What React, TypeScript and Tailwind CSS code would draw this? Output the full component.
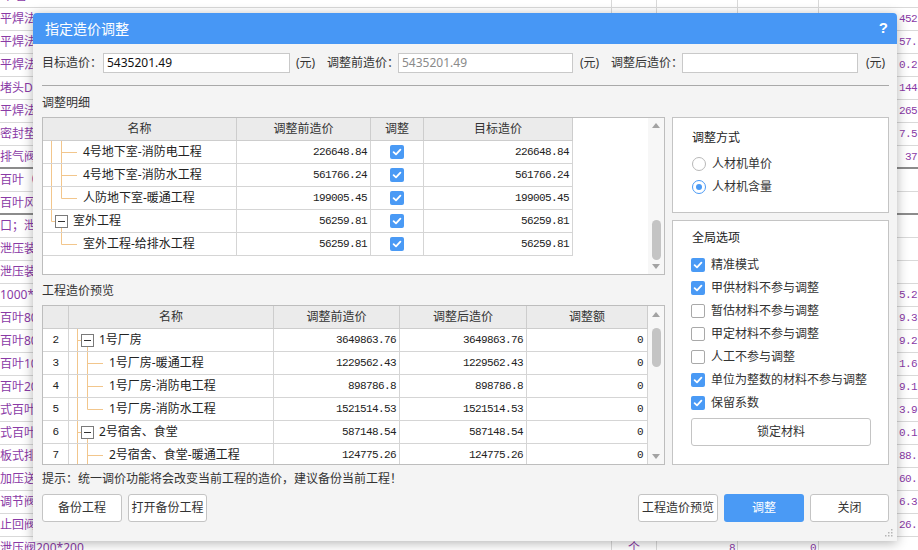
import React from "react";

const ui = "font-['Noto_Sans','Noto_Sans_CJK_SC',sans-serif]";
const mono = "font-['Liberation_Mono','Noto_Sans_CJK_SC',monospace] text-[11px] tracking-[-0.6px]";

// sheet behind the dialog
const sheet: { a: string; b?: string; c?: string; d?: string; thick?: boolean }[] = [
  { a: "叶 管", b: "个" },
  { a: "平焊法兰" },
  { a: "平焊法兰" },
  { a: "平焊法兰" },
  { a: "堵头DN100" },
  { a: "平焊法兰" },
  { a: "密封垫片" },
  { a: "排气阀", thick: true },
  { a: "百叶（" },
  { a: "百叶风口", thick: true },
  { a: "口；泄压" },
  { a: "泄压装置" },
  { a: "泄压装置" },
  { a: "1000*800" },
  { a: "百叶800" },
  { a: "百叶800" },
  { a: "百叶1000" },
  { a: "百叶200" },
  { a: "式百叶" },
  { a: "式百叶" },
  { a: "板式排烟" },
  { a: "加压送风" },
  { a: "调节阀" },
  { a: "止回阀" },
  { a: "泄压阀200*200", b: "个", c: "8", d: "0" },
];
const sheetE = ["", "452", "57.", "0.2", "144", "265", "7.5", "\u00a037", "", "", "", "", "", "5.2", "9.3", "9.2", "1.6", "9.1", "3.9", "0.1", "88.", "60.", "6.3", "26.", ""];

type Guide = { anc?: "full" | "top"; child?: "full" | "top" | "down"; box?: boolean };

function TreeGuide({ anc, child, box }: Guide) {
  const c = "#f2c68c";
  return (
    <svg width={box ? 29 : 40} height="22" className="shrink-0">
      {anc === "full" && <line x1="8.5" y1="0" x2="8.5" y2="22" stroke={c} />}
      {anc === "top" && <line x1="8.5" y1="0" x2="8.5" y2="11.5" stroke={c} />}
      {box ? (
        <>
          {anc && <line x1="8.5" y1="11.5" x2="12.5" y2="11.5" stroke={c} />}
          {child === "down" && <line x1="18.5" y1="17.5" x2="18.5" y2="22" stroke={c} />}
          <rect x="12.5" y="5.5" width="12" height="12" fill="white" stroke="#7a7a7a" />
          <line x1="15" y1="11.5" x2="22" y2="11.5" stroke="#333" />
        </>
      ) : (
        <>
          {child === "full" && <line x1="18.5" y1="0" x2="18.5" y2="22" stroke={c} />}
          {child === "top" && <line x1="18.5" y1="0" x2="18.5" y2="11.5" stroke={c} />}
          <line x1="18.5" y1="11.5" x2="34" y2="11.5" stroke={c} />
        </>
      )}
    </svg>
  );
}

function Check({ on }: { on: boolean }) {
  return on ? (
    <span className="flex h-[14px] w-[14px] shrink-0 items-center justify-center rounded-[2px] bg-[#4a9af5]">
      <svg width="10" height="10" viewBox="0 0 10 10">
        <path d="M1.6 5.2 L4 7.4 L8.4 2.6" fill="none" stroke="white" strokeWidth="1.8" strokeLinecap="round" strokeLinejoin="round" />
      </svg>
    </span>
  ) : (
    <span className="h-[14px] w-[14px] shrink-0 rounded-[2px] border border-[#a9a9a9] bg-white" />
  );
}

function Radio({ on }: { on: boolean }) {
  return (
    <span
      className={`flex h-[14px] w-[14px] shrink-0 items-center justify-center rounded-full border bg-white ${
        on ? "border-[#4a9af5]" : "border-[#b8b8b8]"
      }`}
    >
      {on && <span className="h-[6px] w-[6px] rounded-full bg-[#4a9af5]" />}
    </span>
  );
}

function ScrollBar({ thumb }: { thumb: string }) {
  return (
    <div className="flex w-[16px] shrink-0 flex-col items-center bg-[#f7f7f7]">
      <div className="flex h-[16px] items-center justify-center">
        <svg width="8" height="5">
          <path d="M0 5 L4 0 L8 5Z" fill="#a3a3a3" />
        </svg>
      </div>
      <div className="flex w-full flex-1 flex-col items-center">
        <div className={`${thumb} w-[9px] rounded-full bg-[#c4c4c4]`} />
      </div>
      <div className="flex h-[16px] items-center justify-center">
        <svg width="8" height="5">
          <path d="M0 0 L4 5 L8 0Z" fill="#a3a3a3" />
        </svg>
      </div>
    </div>
  );
}

const head = "flex h-[23px] shrink-0 items-center justify-center border-r border-b border-[#cdcdcd] bg-[#ebebeb]";
const cell = "flex h-[23px] shrink-0 items-center border-r border-b border-[#d5d5d5]";

const detail: { name: string; v: string; g: Guide }[] = [
  { name: "4号地下室-消防电工程", v: "226648.84", g: { anc: "full", child: "full" } },
  { name: "4号地下室-消防水工程", v: "561766.24", g: { anc: "full", child: "full" } },
  { name: "人防地下室-暖通工程", v: "199005.45", g: { anc: "full", child: "top" } },
  { name: "室外工程", v: "56259.81", g: { anc: "top", child: "down", box: true } },
  { name: "室外工程-给排水工程", v: "56259.81", g: { child: "top" } },
];

const preview: { no: string; name: string; before: string; after: string; g: Guide }[] = [
  { no: "2", name: "1号厂房", before: "3649863.76", after: "3649863.76", g: { anc: "full", child: "down", box: true } },
  { no: "3", name: "1号厂房-暖通工程", before: "1229562.43", after: "1229562.43", g: { anc: "full", child: "full" } },
  { no: "4", name: "1号厂房-消防电工程", before: "898786.8", after: "898786.8", g: { anc: "full", child: "full" } },
  { no: "5", name: "1号厂房-消防水工程", before: "1521514.53", after: "1521514.53", g: { anc: "full", child: "top" } },
  { no: "6", name: "2号宿舍、食堂", before: "587148.54", after: "587148.54", g: { anc: "full", child: "down", box: true } },
  { no: "7", name: "2号宿舍、食堂-暖通工程", before: "124775.26", after: "124775.26", g: { anc: "full", child: "full" } },
];

const options: [string, boolean][] = [
  ["精准模式", true],
  ["甲供材料不参与调整", true],
  ["暂估材料不参与调整", false],
  ["甲定材料不参与调整", false],
  ["人工不参与调整", false],
  ["单位为整数的材料不参与调整", true],
  ["保留系数", true],
];

const btn = "flex h-[28px] shrink-0 items-center justify-center rounded-[3px] border border-[#c4c4c4] bg-white text-[12px] text-[#333]";

export default function App() {
  return (
    <div className={`relative h-[550px] w-[918px] overflow-hidden bg-white ${ui}`}>
      {/* Sheet in the background */}
      <div className="mt-[-15px] flex flex-col">
        {sheet.map((r, i) => {
          const under = i > 0 && i < sheet.length - 1;
          return (
            <div
              key={i}
              className={`flex h-[23px] shrink-0 text-[12px] leading-[16px] text-[#8a3aa6] ${
                r.thick ? "border-b-2 border-[#8c8c8c]" : "border-b border-[#d9d9d9]"
              }`}
            >
              <div className="flex w-[612px] shrink-0 items-center border-r border-[#d9d9d9]">
                <span className={`overflow-hidden whitespace-nowrap ${under ? "w-[33px]" : ""}`}>{r.a}</span>
              </div>
              <div className="flex w-[45px] shrink-0 items-center justify-center border-r border-[#d9d9d9]">{r.b}</div>
              <div className={`flex w-[81px] shrink-0 items-center justify-end border-r border-[#d9d9d9] pr-[2px] ${mono}`}>{r.c}</div>
              <div className={`flex w-[81px] shrink-0 items-center justify-end border-r border-[#d9d9d9] pr-[2px] ${mono}`}>{r.d}</div>
              <div className={`flex flex-1 items-center overflow-hidden whitespace-nowrap pl-[80px] ${mono}`}>{sheetE[i]}</div>
            </div>
          );
        })}
      </div>

      {/* Dialog */}
      <div className="absolute left-[33px] top-[13px] flex h-[528px] w-[864px] flex-col overflow-hidden rounded-t-[4px] bg-[#f4f4f4] shadow-[0_2px_12px_rgba(0,0,0,0.3)]">
        <div className="flex h-[31px] shrink-0 items-center justify-between bg-[#4797f5] pl-[12px] pr-[9px]">
          <span className="text-[14px] leading-[18px] text-white">指定造价调整</span>
          <span className="font-['Liberation_Sans',sans-serif] text-[15px] font-bold text-white">?</span>
        </div>

        <div className="flex flex-1 flex-col pl-[9px] pr-[8px] text-[12px] leading-[16px] text-[#333]">
          {/* Price inputs */}
          <div className="mt-[9px] flex h-[20px] shrink-0 items-center">
            <span className="w-[61px] shrink-0 whitespace-nowrap">目标造价：</span>
            <div className="flex h-[20px] w-[187px] shrink-0 items-center border border-[#c9c9c9] bg-white pl-[3px] text-[#111]">5435201.49</div>
            <span className="w-[37px] shrink-0 pl-[6px]">(元)</span>
            <span className="w-[71px] shrink-0 whitespace-nowrap">调整前造价：</span>
            <div className="flex h-[20px] w-[175px] shrink-0 items-center border border-[#c9c9c9] bg-white pl-[3px] text-[#8a8a8a]">5435201.49</div>
            <span className="w-[38px] shrink-0 pl-[7px]">(元)</span>
            <span className="w-[71px] shrink-0 whitespace-nowrap">调整后造价：</span>
            <div className="h-[20px] w-[176px] shrink-0 border border-[#c9c9c9] bg-white" />
            <span className="shrink-0 pl-[8px]">(元)</span>
          </div>

          <div className="mt-[12px] h-px shrink-0 bg-[#a9a9a9]" />

          <div className="mt-[10px] h-[14px] shrink-0 leading-[14px]">调整明细</div>

          <div className="mt-[7px] flex shrink-0 gap-[7px]">
            {/* Left: tables */}
            <div className="flex w-[623px] shrink-0 flex-col">
              <div className="flex h-[158px] border border-[#bdbdbd] bg-white">
                <div className="flex flex-1 flex-col">
                  <div className="flex">
                    <div className={`${head} w-[194px]`}>名称</div>
                    <div className={`${head} w-[134px]`}>调整前造价</div>
                    <div className={`${head} w-[53px]`}>调整</div>
                    <div className={`${head} w-[149px]`}>目标造价</div>
                  </div>
                  {detail.map((r) => (
                    <div key={r.name + r.v} className="flex">
                      <div className={`${cell} w-[194px] whitespace-nowrap text-[#222]`}>
                        <TreeGuide {...r.g} />
                        <span className={r.g.box ? "pl-[1px]" : ""}>{r.name}</span>
                      </div>
                      <div className={`${cell} w-[134px] justify-end pr-[3px] text-[#222] ${mono}`}>{r.v}</div>
                      <div className={`${cell} w-[53px] justify-center`}>
                        <Check on />
                      </div>
                      <div className={`${cell} w-[149px] justify-end pr-[3px] text-[#222] ${mono}`}>{r.v}</div>
                    </div>
                  ))}
                </div>
                <ScrollBar thumb="mt-[87px] h-[40px]" />
              </div>

              <div className="mt-[9px] h-[14px] leading-[14px]">工程造价预览</div>

              <div className="mt-[7px] flex h-[160px] overflow-hidden border border-[#bdbdbd] bg-white">
                <div className="flex flex-1 flex-col overflow-hidden">
                  <div className="flex">
                    <div className={`${head} w-[26px]`} />
                    <div className={`${head} w-[205px]`}>名称</div>
                    <div className={`${head} w-[126px]`}>调整前造价</div>
                    <div className={`${head} w-[127px]`}>调整后造价</div>
                    <div className={`${head} w-[121px]`}>调整额</div>
                  </div>
                  {preview.map((r) => (
                    <div key={r.no} className="flex">
                      <div className={`${cell} w-[26px] justify-center text-[#222] ${mono}`}>{r.no}</div>
                      <div className={`${cell} w-[205px] whitespace-nowrap text-[#222]`}>
                        <TreeGuide {...r.g} />
                        <span className={r.g.box ? "pl-[1px]" : ""}>{r.name}</span>
                      </div>
                      <div className={`${cell} w-[126px] justify-end pr-[3px] text-[#222] ${mono}`}>{r.before}</div>
                      <div className={`${cell} w-[127px] justify-end pr-[3px] text-[#222] ${mono}`}>{r.after}</div>
                      <div className={`${cell} w-[121px] justify-end pr-[4px] text-[#222] ${mono}`}>0</div>
                    </div>
                  ))}
                </div>
                <ScrollBar thumb="mt-[6px] h-[39px]" />
              </div>
            </div>

            {/* Right: options */}
            <div className="flex w-[217px] shrink-0 flex-col gap-[7px]">
              <div className="flex h-[96px] flex-col border border-[#c4c4c4] bg-white pl-[19px] pt-[12px]">
                <div className="h-[16px] text-[#222]">调整方式</div>
                <div className="mt-[6px] flex h-[23px] items-center gap-[6px]">
                  <Radio on={false} />
                  <span>人材机单价</span>
                </div>
                <div className="flex h-[23px] items-center gap-[6px]">
                  <Radio on />
                  <span>人材机含量</span>
                </div>
              </div>

              <div className="flex h-[245px] flex-col border border-[#c4c4c4] bg-white pl-[18px] pt-[9px]">
                <div className="h-[16px] pl-[1px] text-[#222]">全局选项</div>
                <div className="mt-[7px] flex flex-col">
                  {options.map(([label, on]) => (
                    <div key={label} className="flex h-[23px] items-center gap-[6px] whitespace-nowrap">
                      <Check on={on} />
                      <span>{label}</span>
                    </div>
                  ))}
                </div>
                <div className={`${btn} mt-[4px] h-[27px] w-[180px]`}>锁定材料</div>
              </div>
            </div>
          </div>

          <div className="mt-[7px] h-[14px] shrink-0 leading-[14px]">提示：统一调价功能将会改变当前工程的造价，建议备份当前工程！</div>

          <div className="mt-[8px] flex shrink-0 items-center">
            <div className={`${btn} w-[80px]`}>备份工程</div>
            <div className={`${btn} ml-[6px] w-[79px]`}>打开备份工程</div>
            <div className="flex-1" />
            <div className={`${btn} w-[80px] whitespace-nowrap`}>工程造价预览</div>
            <div className="ml-[6px] flex h-[28px] w-[80px] shrink-0 items-center justify-center rounded-[3px] bg-[#4a9af5] text-[12px] text-white">
              调整
            </div>
            <div className={`${btn} ml-[6px] w-[79px]`}>关闭</div>
          </div>
        </div>

        <svg width="10" height="10" className="absolute bottom-[4px] right-[4px]">
          <rect x="8" y="2" width="1.5" height="1.5" fill="#b5b5b5" />
          <rect x="5" y="5" width="1.5" height="1.5" fill="#b5b5b5" />
          <rect x="8" y="5" width="1.5" height="1.5" fill="#b5b5b5" />
          <rect x="2" y="8" width="1.5" height="1.5" fill="#b5b5b5" />
          <rect x="5" y="8" width="1.5" height="1.5" fill="#b5b5b5" />
          <rect x="8" y="8" width="1.5" height="1.5" fill="#b5b5b5" />
        </svg>
      </div>
    </div>
  );
}
